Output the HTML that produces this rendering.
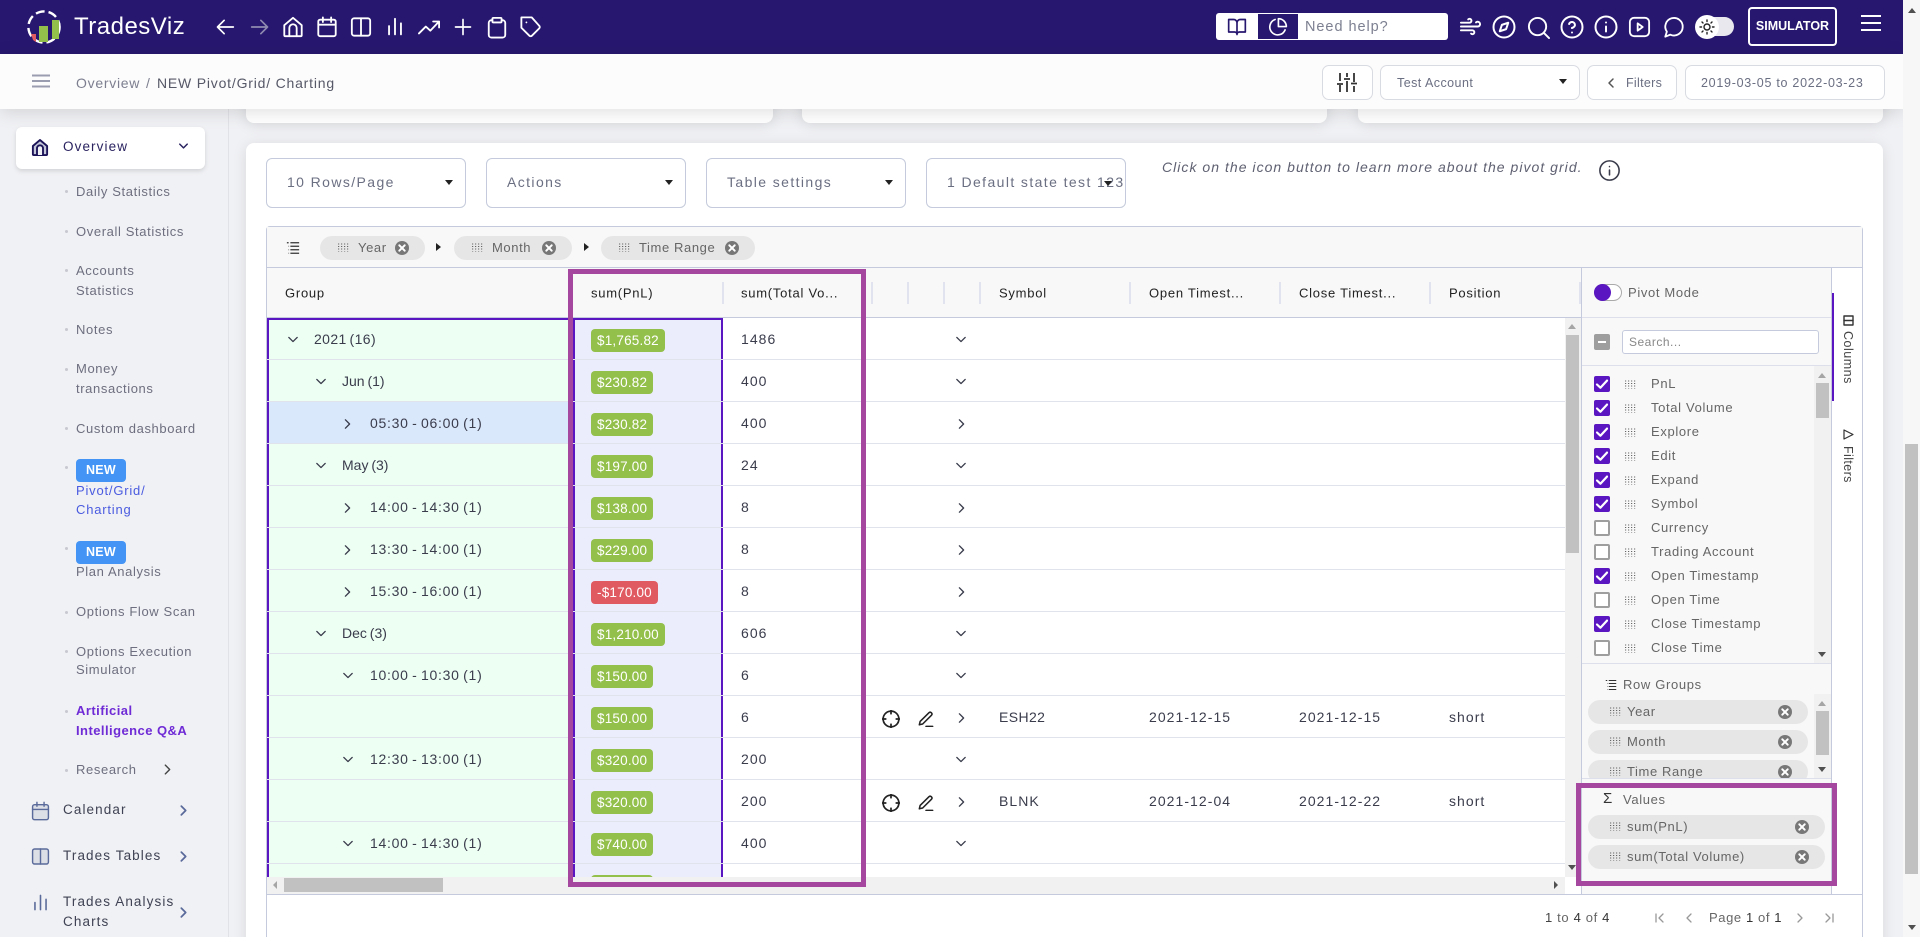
<!DOCTYPE html>
<html><head><meta charset="utf-8"><title>TradesViz</title>
<style>
html,body{margin:0;padding:0;width:1920px;height:937px;overflow:hidden;background:#f0f1f4;font-family:"Liberation Sans",sans-serif}
*{box-sizing:border-box}
#root{position:absolute;left:0;top:0;width:1920px;height:937px;overflow:hidden;background:#f0f1f4}
svg{position:absolute;overflow:visible;fill:none;stroke:currentColor;stroke-width:2;stroke-linecap:round;stroke-linejoin:round}
.x{position:absolute;white-space:nowrap}
#hd{position:absolute;left:0;top:0;width:1903px;height:54px;background:#27176f;color:#fff}
#sub{position:absolute;left:0;top:54px;width:1903px;height:55px;background:#fcfcfc;box-shadow:0 3px 18px rgba(0,0,0,.13);z-index:3}
#side{position:absolute;left:0;top:109px;width:229px;height:828px;border-right:1px solid #e0e2e7;background:#f0f1f4}
.s{position:absolute;left:76px;font-size:13px;letter-spacing:.62px;color:#6d6e7f;white-space:nowrap;line-height:18px}
.b{position:absolute;left:65px;width:3px;height:3px;border-radius:50%;background:#c7c9d0}
.m{position:absolute;left:63px;font-size:13.5px;letter-spacing:1.1px;color:#3f4254;white-space:nowrap;line-height:18px}
.new{position:absolute;left:76px;width:50px;height:23px;border-radius:4px;background:#4394f4;color:#fff;font-size:12.5px;font-weight:bold;text-align:center;line-height:22px;letter-spacing:.3px}
.card{position:absolute;background:#fff;border-radius:8px;box-shadow:0 2px 14px rgba(0,0,0,.1)}
.sel{position:absolute;top:158px;height:50px;width:200px;border:1px solid #c5cbdc;border-radius:6px;background:#fff;overflow:hidden}
.st{position:absolute;left:20px;top:0;line-height:47px;font-size:14px;letter-spacing:1.4px;color:#6b6f82;white-space:nowrap}
.car{position:absolute;width:0;height:0;border-left:4px solid transparent;border-right:4px solid transparent;border-top:5px solid #222}
.bt{position:absolute;top:65px;height:35px;border:1px solid #d9dbe2;border-radius:7px;background:#fff;font-size:12.5px;letter-spacing:.45px;color:#6b6f82;line-height:34px;white-space:nowrap}
.chip{position:absolute;height:24px;border-radius:12px;background:#e6e6e6;font-size:13px;letter-spacing:.6px;color:#666;line-height:24px;white-space:nowrap}
.ch{position:absolute;top:293px;font-size:13px;letter-spacing:.75px;color:#222;transform:translateY(-50%);white-space:nowrap}
.sp{position:absolute;top:282px;width:2px;height:22px;background:#e1e4ee}
#rows{position:absolute;left:267px;top:317px;width:1298px;height:560px;overflow:hidden;background:#fff}
.r{position:absolute;left:0;margin-top:1px;width:1298px;height:42px;border-bottom:1px solid #e1e3ec;font-size:14px;letter-spacing:1.05px;color:#3a3c4c}
.r>span{position:absolute;top:0;line-height:43px;white-space:nowrap}
.r>span.g{letter-spacing:.72px;word-spacing:-1.1px}
.r>span.l{letter-spacing:0;word-spacing:-1px}
.r>em{position:absolute;left:324px;top:11px;height:23px;border-radius:4px;background:#93bf4b;color:#fff;font:13.5px/23px "Liberation Sans",sans-serif;letter-spacing:.2px;padding:0 6px;text-align:center}
.r>svg{color:#3a3c4c;stroke-width:1.6}
.r>svg.ic{color:#222;stroke-width:2.3}
.cl{position:absolute;left:1594px;width:16px;height:16px;border-radius:2px;background:#5a16c0}
.cl.u{background:#fff;border:2px solid #9e9e9e}
.cn{position:absolute;left:1651px;font-size:13px;letter-spacing:.65px;color:#666;line-height:18px;white-space:nowrap}
.tr{position:absolute;width:0;height:0}
.ann{position:absolute;border:5px solid #a5479f;z-index:5}
</style></head><body>
<div id="root">
<svg width="0" height="0" style="position:absolute"><defs>
<symbol id="dn" viewBox="0 0 12 8"><path d="M1 1.500l5 5 5-5"/></symbol>
<symbol id="rt" viewBox="0 0 8 12"><path d="M1.500 1l5 5-5 5"/></symbol>
<symbol id="grip" viewBox="0 0 11 9"><path d="M.6 .5v8M3.600 .5v8M6.600 .5v8M9.600 .5v8" stroke="#666" stroke-width="1.200" stroke-dasharray="1 1.500" stroke-linecap="butt"/></symbol>
<symbol id="cls" viewBox="0 0 14 14"><circle cx="7" cy="7" r="7" fill="#777" stroke="none"/><path d="M4.300 4.300l5.400 5.400M9.700 4.300l-5.400 5.400" stroke="#fff" stroke-width="2"/></symbol>
<symbol id="chk" viewBox="0 0 16 16"><path d="M3 8.500l3.400 3.200L13 4.600" stroke="#fff" stroke-width="2.200"/></symbol>
<symbol id="cross" viewBox="0 0 24 24"><circle cx="12" cy="12" r="10.500"/><path d="M12 0v5M12 19v5M0 12h5M19 12h5"/></symbol>
<symbol id="pen" viewBox="0 0 24 24"><path d="M16.500 2.500a2.700 2.700 0 0 1 3.800 3.800L7 19.500l-5 1.200 1.200-5L16.500 2.500z"/><path d="M12 23h10"/></symbol>
<symbol id="lst" viewBox="0 0 16 16"><path d="M1 2h2M5 2h10M5 6h10M5 10h10M5 14h10M3 6h.5M3 10h.5M3 14h.5" stroke-width="1.400" stroke-linecap="butt"/></symbol>
</defs></svg>

<div id="hd">
<svg style="left:27px;top:10px" width="34" height="34" viewBox="0 0 34 34"><circle cx="17" cy="17" r="15.600" stroke="#fff" stroke-width="2.400" stroke-dasharray="9 4" stroke-linecap="butt"/><rect x="12" y="16" width="9" height="16" fill="#93bf4b" stroke="none"/><rect x="25" y="10" width="7" height="19" fill="#93bf4b" stroke="none"/><path d="M4 24h5v8l-3-2z" fill="#e05a62" stroke="none"/></svg>
<div class="x" style="left:74px;top:13px;font-size:24px;line-height:28px;letter-spacing:.5px;color:#fff">TradesViz</div>
<svg style="left:215px;top:17px" width="20" height="20" viewBox="0 0 24 24"><path d="M22 12H3M11 20l-8-8 8-8"/></svg>
<svg style="left:250px;top:17px;color:#8f8ab0" width="20" height="20" viewBox="0 0 24 24"><path d="M2 12h19M13 4l8 8-8 8"/></svg>
<svg style="left:282px;top:16px" width="22" height="22" viewBox="0 0 24 24"><path d="M2.500 10L12 2l9.500 8v11a1 1 0 0 1-1 1h-17a1 1 0 0 1-1-1z"/><path d="M8 22v-9a4 4 0 0 1 8 0v9"/></svg>
<svg style="left:316px;top:16px" width="22" height="22" viewBox="0 0 24 24"><rect x="2.500" y="4" width="19" height="18" rx="2"/><path d="M7.500 1.500v5M16.500 1.500v5M2.500 9.500h19"/></svg>
<svg style="left:350px;top:16px" width="22" height="22" viewBox="0 0 24 24"><rect x="2" y="2.500" width="20" height="19" rx="2.500"/><path d="M12 2.500v19"/></svg>
<svg style="left:384px;top:16px" width="22" height="22" viewBox="0 0 24 24"><path d="M12 20V3M5.500 20v-9M18.500 20V8"/></svg>
<svg style="left:417px;top:16px" width="24" height="22" viewBox="0 0 24 24"><path d="M1 19l7.500-7.500 5 4.500L23 6M16.500 6H23v6.500"/></svg>
<svg style="left:453px;top:17px" width="20" height="20" viewBox="0 0 24 24"><path d="M12 3v18M3 12h18"/></svg>
<svg style="left:486px;top:16px" width="22" height="23" viewBox="0 0 24 24"><path d="M17 4h1a3 3 0 0 1 3 3v13a3 3 0 0 1-3 3H6a3 3 0 0 1-3-3V7a3 3 0 0 1 3-3h1"/><rect x="7" y="1.500" width="10" height="5" rx="1"/></svg>
<svg style="left:520px;top:16px" width="22" height="22" viewBox="0 0 24 24"><path d="M21 13.500l-8 8a2 2 0 0 1-2.800 0L1.500 12.800V1.500h11.300L21 10.700a2 2 0 0 1 0 2.800z"/><path d="M7 7h.01"/></svg>

<div style="position:absolute;left:1216px;top:13px;width:232px;height:27px;background:#fff;border-radius:3px"></div>
<svg style="left:1227px;top:17px;color:#27176f" width="20" height="20" viewBox="0 0 24 24"><path d="M2 3h6a4 4 0 0 1 4 4v14a3 3 0 0 0-3-3H2zM22 3h-6a4 4 0 0 0-4 4v14a3 3 0 0 1 3-3h7z"/></svg>
<div style="position:absolute;left:1258px;top:14px;width:40px;height:25px;background:#27176f"></div>
<svg style="left:1268px;top:17px" width="20" height="20" viewBox="0 0 24 24"><path d="M20.500 15.500A9.500 9.500 0 1 1 8.500 3"/><path d="M22 11.500A9.500 9.500 0 0 0 12.500 2v9.500z"/></svg>
<div class="x" style="left:1305px;top:14px;line-height:27px;font-size:14.500px;letter-spacing:.95px;color:#7d8091">Need help?</div>
<svg style="left:1459px;top:15px" width="23" height="23" viewBox="0 0 24 24"><path d="M9.590 4.590A2 2 0 1 1 11 8H2m10.590 11.410A2 2 0 1 0 14 16H2m15.730-8.270A2.500 2.500 0 1 1 19.500 12H2"/></svg>
<svg style="left:1492px;top:15px" width="24" height="24" viewBox="0 0 24 24"><circle cx="12" cy="12" r="10.500"/><path d="M16.240 7.760l-2.120 6.360-6.360 2.120 2.120-6.360z"/></svg>
<svg style="left:1527px;top:16px" width="23" height="23" viewBox="0 0 24 24"><circle cx="11" cy="11" r="9"/><path d="M23 23l-5.500-5.500"/></svg>
<svg style="left:1560px;top:15px" width="24" height="24" viewBox="0 0 24 24"><circle cx="12" cy="12" r="10.500"/><path d="M9.090 9a3 3 0 0 1 5.830 1c0 2-3 3-3 3M12 17.500h.01"/></svg>
<svg style="left:1594px;top:15px" width="24" height="24" viewBox="0 0 24 24"><circle cx="12" cy="12" r="10.500"/><path d="M12 16.500v-5M12 7.500h.01"/></svg>
<svg style="left:1628px;top:16px" width="23" height="22" viewBox="0 0 24 24"><rect x="1.500" y="2" width="21" height="20" rx="4.500"/><path d="M10 8l5.500 4-5.500 4z"/></svg>
<svg style="left:1663px;top:16px" width="22" height="23" viewBox="0 0 24 24"><path d="M21.500 11.500a9.500 9.500 0 0 1-13.500 8.300L2.500 22l1.700-5.500A9.500 9.500 0 1 1 21.500 11.500z"/></svg>
<div style="position:absolute;left:1702px;top:17px;width:32px;height:19px;border-radius:10px;background:#e8e8ee"></div>
<div style="position:absolute;left:1695px;top:15px;width:24px;height:24px;border-radius:50%;background:#fff"></div>
<svg style="left:1700px;top:20px;color:#222;stroke-width:1.400" width="14" height="14" viewBox="0 0 14 14"><circle cx="7" cy="7" r="3"/><path d="M7 0v1.500M7 12.500V14M0 7h1.500M12.500 7H14M2 2l1 1M11 11l1 1M12 2l-1 1M3 11l-1 1"/></svg>
<div class="x" style="left:1748px;top:7px;width:89px;height:39px;border:2px solid #fff;border-radius:4px;text-align:center;line-height:35px;font-size:12.500px;font-weight:bold;color:#fff">SIMULATOR</div>
<svg style="left:1861px;top:15px" width="20" height="16" viewBox="0 0 20 16"><path d="M0 1h20M0 8h20M0 15h20" stroke-linecap="butt"/></svg>
</div>

<div id="sub">
<svg style="left:32px;top:20px;color:#9a9cb0" width="18" height="14" viewBox="0 0 18 14"><path d="M0 1.500h18M0 7h18M0 12.500h18" stroke-linecap="butt"/></svg>
<div class="x" style="left:76px;top:20px;font-size:14px;line-height:18px;letter-spacing:.72px;color:#7d7f90">Overview</div>
<div class="x" style="left:146px;top:20px;font-size:14px;line-height:18px;color:#7d7f90">/</div>
<div class="x" style="left:157px;top:20px;font-size:14px;line-height:18px;letter-spacing:.8px;color:#565868">NEW Pivot/Grid/ Charting</div>
<div class="bt" style="left:1322px;top:11px;width:51px"></div>
<svg style="left:1337px;top:19px;color:#333;stroke-width:1.800" width="20" height="19" viewBox="0 0 20 19"><path d="M3 0v8M3 12v7M10 0v4M10 8v11M17 0v9M17 13v6M0 11h6M7 6h6M14 10.500h6" stroke-linecap="butt"/></svg>
<div class="bt" style="left:1380px;top:11px;width:200px;padding-left:16px">Test Account</div>
<div class="car" style="left:1559px;top:25px"></div>
<div class="bt" style="left:1587px;top:11px;width:90px;padding-left:38px;letter-spacing:.3px">Filters</div>
<svg style="left:1608px;top:24px;color:#555;stroke-width:1.500" width="6" height="10" viewBox="0 0 6 10"><path d="M5 1L1 5l4 4"/></svg>
<div class="bt" style="left:1685px;top:11px;width:200px;padding-left:15px;letter-spacing:.72px">2019-03-05 to 2022-03-23</div>
</div>

<div id="side">
<div style="position:absolute;left:16px;top:18px;width:189px;height:42px;background:#fff;border-radius:6px;box-shadow:0 2px 5px rgba(0,0,0,.13)"></div>
<svg style="left:31px;top:29px;color:#1c1458;stroke-width:2.500" width="18" height="19" viewBox="0 0 24 24"><path d="M2.500 10L12 2l9.500 8v11a1 1 0 0 1-1 1h-17a1 1 0 0 1-1-1z" fill="#c3c5d8"/><path d="M8 22v-9a4 4 0 0 1 8 0v9" fill="#f0f1f4"/></svg>
<div class="m" style="top:29px;color:#2a2360">Overview</div>
<svg style="left:179px;top:34px;color:#2a2360;stroke-width:2" width="9" height="6" viewBox="0 0 12 8"><path d="M1 1.500l5 5 5-5"/></svg>
<i class="b" style="top:81px"></i><div class="s" style="top:74px">Daily Statistics</div>
<i class="b" style="top:121px"></i><div class="s" style="top:114px">Overall Statistics</div>
<i class="b" style="top:160px"></i><div class="s" style="top:153px">Accounts</div><div class="s" style="top:173px">Statistics</div>
<i class="b" style="top:219px"></i><div class="s" style="top:212px">Notes</div>
<i class="b" style="top:259px"></i><div class="s" style="top:251px">Money</div><div class="s" style="top:271px">transactions</div>
<i class="b" style="top:318px"></i><div class="s" style="top:311px">Custom dashboard</div>
<i class="b" style="top:357px"></i><div class="new" style="top:350px">NEW</div><div class="s" style="top:373px;color:#4a5be0;letter-spacing:.8px">Pivot/Grid/</div><div class="s" style="top:392px;color:#4a5be0;letter-spacing:.8px">Charting</div>
<i class="b" style="top:438px"></i><div class="new" style="top:432px">NEW</div><div class="s" style="top:454px">Plan Analysis</div>
<i class="b" style="top:502px"></i><div class="s" style="top:494px">Options Flow Scan</div>
<i class="b" style="top:541px"></i><div class="s" style="top:534px">Options Execution</div><div class="s" style="top:552px">Simulator</div>
<i class="b" style="top:601px"></i><div class="s" style="top:593px;color:#6f2bd6;font-weight:bold;letter-spacing:.45px">Artificial</div><div class="s" style="top:613px;color:#6f2bd6;font-weight:bold;letter-spacing:.45px">Intelligence Q&amp;A</div>
<i class="b" style="top:660px"></i><div class="s" style="top:652px">Research</div>
<svg style="left:164px;top:655px;color:#444;stroke-width:1.600" width="7" height="11" viewBox="0 0 8 12"><path d="M1.500 1l5 5-5 5"/></svg>
<svg style="left:31px;top:692px;color:#5a6a9a;stroke-width:1.800" width="19" height="20" viewBox="0 0 24 24"><rect x="2" y="4" width="20" height="19" rx="2.500" fill="#dcdfe6"/><path d="M7.500 1v5M16.500 1v5M2 10h20"/></svg>
<div class="m" style="top:692px">Calendar</div>
<svg style="left:180px;top:696px;color:#5a6a9a" width="7" height="11" viewBox="0 0 8 12"><path d="M1.500 1l5 5-5 5"/></svg>
<svg style="left:31px;top:738px;color:#5a6a9a;stroke-width:1.800" width="19" height="19" viewBox="0 0 24 24"><rect x="2" y="2.500" width="20" height="19" rx="2.500" fill="#dcdfe6"/><path d="M12 2.500v19"/></svg>
<div class="m" style="top:738px">Trades Tables</div>
<svg style="left:180px;top:742px;color:#5a6a9a" width="7" height="11" viewBox="0 0 8 12"><path d="M1.500 1l5 5-5 5"/></svg>
<svg style="left:31px;top:784px;color:#5a6a9a" width="19" height="19" viewBox="0 0 24 24"><path d="M12 21V3M5 21v-9M19 21V8"/></svg>
<div class="m" style="top:784px">Trades Analysis</div><div class="m" style="top:804px">Charts</div>
<svg style="left:180px;top:798px;color:#5a6a9a" width="7" height="11" viewBox="0 0 8 12"><path d="M1.500 1l5 5-5 5"/></svg>
</div>

<div class="card" style="left:246px;top:90px;width:527px;height:33px"></div>
<div class="card" style="left:802px;top:90px;width:525px;height:33px"></div>
<div class="card" style="left:1358px;top:90px;width:525px;height:33px"></div>
<div class="card" style="left:246px;top:143px;width:1637px;height:830px"></div>

<div class="sel" style="left:266px"><div class="st">10 Rows/Page</div></div><div class="car" style="left:445px;top:180px"></div>
<div class="sel" style="left:486px"><div class="st">Actions</div></div><div class="car" style="left:665px;top:180px"></div>
<div class="sel" style="left:706px"><div class="st">Table settings</div></div><div class="car" style="left:885px;top:180px"></div>
<div class="sel" style="left:926px"><div class="st">1 Default state test 123</div><div class="car" style="left:177px;top:22px"></div></div>
<div class="x" style="left:1162px;top:158px;font-size:14px;line-height:18px;font-style:italic;letter-spacing:1.03px;color:#5f6172">Click on the icon button to learn more about the pivot grid.</div>
<svg style="left:1599px;top:160px;color:#3a3c4c;stroke-width:1.800" width="21" height="21" viewBox="0 0 24 24"><circle cx="12" cy="12" r="11"/><path d="M12 17v-5.500M12 7.500h.01"/></svg>

<!-- grid frame -->
<div style="position:absolute;left:266px;top:226px;width:1597px;height:740px;border:1px solid #c5cbdc;border-bottom:0;border-radius:4px 4px 0 0;background:#fff"></div>
<div style="position:absolute;left:267px;top:227px;width:1595px;height:41px;background:#f8f8f8;border-bottom:1px solid #c5cbdc"></div>
<svg style="left:286px;top:241px;color:#333" width="14" height="14" viewBox="0 0 16 16"><use href="#lst"/></svg>
<div class="chip" style="left:320px;top:236px;width:105px;padding-left:38px">Year</div>
<svg style="left:338px;top:243px;width:11px;height:9px"><use href="#grip"/></svg>
<svg style="left:395px;top:241px;width:14px;height:14px"><use href="#cls"/></svg>
<div class="tr" style="left:436px;top:243px;border-left:5px solid #222;border-top:4px solid transparent;border-bottom:4px solid transparent"></div>
<div class="chip" style="left:454px;top:236px;width:118px;padding-left:38px">Month</div>
<svg style="left:472px;top:243px;width:11px;height:9px"><use href="#grip"/></svg>
<svg style="left:542px;top:241px;width:14px;height:14px"><use href="#cls"/></svg>
<div class="tr" style="left:584px;top:243px;border-left:5px solid #222;border-top:4px solid transparent;border-bottom:4px solid transparent"></div>
<div class="chip" style="left:601px;top:236px;width:154px;padding-left:38px">Time Range</div>
<svg style="left:619px;top:243px;width:11px;height:9px"><use href="#grip"/></svg>
<svg style="left:725px;top:241px;width:14px;height:14px"><use href="#cls"/></svg>

<!-- header row -->
<div style="position:absolute;left:267px;top:268px;width:1315px;height:50px;background:#f8f8f8;border-bottom:1px solid #c5cbdc"></div>
<div class="ch" style="left:285px">Group</div>
<div class="ch" style="left:591px">sum(PnL)</div><i class="sp" style="left:722px"></i>
<div class="ch" style="left:741px">sum(Total Vo...</div><i class="sp" style="left:871px"></i><i class="sp" style="left:907px"></i><i class="sp" style="left:943px"></i><i class="sp" style="left:979px"></i>
<div class="ch" style="left:999px">Symbol</div><i class="sp" style="left:1129px"></i>
<div class="ch" style="left:1149px">Open Timest...</div><i class="sp" style="left:1279px"></i>
<div class="ch" style="left:1299px">Close Timest...</div><i class="sp" style="left:1429px"></i>
<div class="ch" style="left:1449px">Position</div><i class="sp" style="left:1579px"></i>

<!-- rows -->
<div id="rows" style="top:318px;height:559px">
<div style="position:absolute;left:0;top:0;width:306px;height:560px;background:#edfff3;border-left:2px solid #5a16c0;border-top:2px solid #5a16c0"></div>
<div style="position:absolute;left:0;top:84px;width:306px;height:42px;background:#dae8fb;border-left:2px solid #5a16c0"></div>
<div style="position:absolute;left:306px;top:0;width:150px;height:560px;background:#ebedfd;border-left:2px solid #5a16c0;border-right:2px solid #5a16c0;border-top:2px solid #5a16c0"></div>

<div class="r" style="top:-1px"><svg style="left:21px;top:18px" width="10" height="7"><use href="#dn"/></svg><span style="left:47px;letter-spacing:.4px;word-spacing:-1.500px">2021 (16)</span><em>$1,765.82</em><span style="left:474px">1486</span><svg style="left:689px;top:18px" width="10" height="7"><use href="#dn"/></svg></div>
<div class="r" style="top:41px"><svg style="left:49px;top:18px" width="10" height="7"><use href="#dn"/></svg><span class="l" style="left:75px">Jun (1)</span><em>$230.82</em><span style="left:474px">400</span><svg style="left:689px;top:18px" width="10" height="7"><use href="#dn"/></svg></div>
<div class="r" style="top:83px"><svg style="left:77px;top:17px" width="7" height="10"><use href="#rt"/></svg><span class="g" style="left:103px">05:30 - 06:00 (1)</span><em>$230.82</em><span style="left:474px">400</span><svg style="left:691px;top:17px" width="7" height="10"><use href="#rt"/></svg></div>
<div class="r" style="top:125px"><svg style="left:49px;top:18px" width="10" height="7"><use href="#dn"/></svg><span class="l" style="left:75px">May (3)</span><em>$197.00</em><span style="left:474px">24</span><svg style="left:689px;top:18px" width="10" height="7"><use href="#dn"/></svg></div>
<div class="r" style="top:167px"><svg style="left:77px;top:17px" width="7" height="10"><use href="#rt"/></svg><span class="g" style="left:103px">14:00 - 14:30 (1)</span><em>$138.00</em><span style="left:474px">8</span><svg style="left:691px;top:17px" width="7" height="10"><use href="#rt"/></svg></div>
<div class="r" style="top:209px"><svg style="left:77px;top:17px" width="7" height="10"><use href="#rt"/></svg><span class="g" style="left:103px">13:30 - 14:00 (1)</span><em>$229.00</em><span style="left:474px">8</span><svg style="left:691px;top:17px" width="7" height="10"><use href="#rt"/></svg></div>
<div class="r" style="top:251px"><svg style="left:77px;top:17px" width="7" height="10"><use href="#rt"/></svg><span class="g" style="left:103px">15:30 - 16:00 (1)</span><em style="background:#e05a62">-$170.00</em><span style="left:474px">8</span><svg style="left:691px;top:17px" width="7" height="10"><use href="#rt"/></svg></div>
<div class="r" style="top:293px"><svg style="left:49px;top:18px" width="10" height="7"><use href="#dn"/></svg><span class="l" style="left:75px">Dec (3)</span><em>$1,210.00</em><span style="left:474px">606</span><svg style="left:689px;top:18px" width="10" height="7"><use href="#dn"/></svg></div>
<div class="r" style="top:335px"><svg style="left:76px;top:18px" width="10" height="7"><use href="#dn"/></svg><span class="g" style="left:103px">10:00 - 10:30 (1)</span><em>$150.00</em><span style="left:474px">6</span><svg style="left:689px;top:18px" width="10" height="7"><use href="#dn"/></svg></div>
<div class="r" style="top:377px"><em>$150.00</em><span style="left:474px">6</span><svg class="ic" style="left:615px;top:14px" width="18" height="18" viewBox="0 0 24 24"><use href="#cross"/></svg><svg class="ic" style="left:651px;top:15px" width="16" height="16" viewBox="0 0 24 24"><use href="#pen"/></svg><svg style="left:691px;top:17px" width="7" height="10"><use href="#rt"/></svg><span style="left:732px;letter-spacing:.4px">ESH22</span><span style="left:882px">2021-12-15</span><span style="left:1032px">2021-12-15</span><span style="left:1182px">short</span></div>
<div class="r" style="top:419px"><svg style="left:76px;top:18px" width="10" height="7"><use href="#dn"/></svg><span class="g" style="left:103px">12:30 - 13:00 (1)</span><em>$320.00</em><span style="left:474px">200</span><svg style="left:689px;top:18px" width="10" height="7"><use href="#dn"/></svg></div>
<div class="r" style="top:461px"><em>$320.00</em><span style="left:474px">200</span><svg class="ic" style="left:615px;top:14px" width="18" height="18" viewBox="0 0 24 24"><use href="#cross"/></svg><svg class="ic" style="left:651px;top:15px" width="16" height="16" viewBox="0 0 24 24"><use href="#pen"/></svg><svg style="left:691px;top:17px" width="7" height="10"><use href="#rt"/></svg><span style="left:732px">BLNK</span><span style="left:882px">2021-12-04</span><span style="left:1032px">2021-12-22</span><span style="left:1182px">short</span></div>
<div class="r" style="top:503px"><svg style="left:76px;top:18px" width="10" height="7"><use href="#dn"/></svg><span class="g" style="left:103px">14:00 - 14:30 (1)</span><em>$740.00</em><span style="left:474px">400</span><svg style="left:689px;top:18px" width="10" height="7"><use href="#dn"/></svg></div>
<div class="r" style="top:545px"><em>$000.00</em></div>
</div>

<!-- grid scrollbars -->
<div style="position:absolute;left:1565px;top:318px;width:17px;height:559px;background:#f1f1f1"></div>
<div style="position:absolute;left:1566px;top:335px;width:13px;height:218px;background:#c1c1c1"></div>
<div class="tr" style="left:1568px;top:324px;border-bottom:5px solid #a5a5a5;border-left:4px solid transparent;border-right:4px solid transparent"></div>
<div class="tr" style="left:1568px;top:865px;border-top:5px solid #505050;border-left:4px solid transparent;border-right:4px solid transparent"></div>
<div style="position:absolute;left:267px;top:877px;width:1298px;height:17px;background:#f1f1f1"></div>
<div style="position:absolute;left:284px;top:878px;width:159px;height:14px;background:#c1c1c1"></div>
<div class="tr" style="left:273px;top:881px;border-right:4px solid #a5a5a5;border-top:4px solid transparent;border-bottom:4px solid transparent"></div>
<div class="tr" style="left:1554px;top:881px;border-left:4px solid #505050;border-top:4px solid transparent;border-bottom:4px solid transparent"></div>
<div style="position:absolute;left:267px;top:894px;width:1595px;height:1px;background:#c5cbdc"></div>

<!-- side panel -->
<div style="position:absolute;left:1581px;top:268px;width:251px;height:626px;background:#f8f8f8;border-left:1px solid #c5cbdc;border-right:1px solid #c5cbdc"></div>
<div style="position:absolute;left:1832px;top:268px;width:30px;height:626px;background:#fff"></div>
<div style="position:absolute;left:1832px;top:293px;width:2px;height:108px;background:#5a16c0"></div>
<div style="position:absolute;left:1582px;top:317px;width:249px;height:1px;background:#dde0ea"></div>
<div style="position:absolute;left:1582px;top:365px;width:249px;height:1px;background:#dde0ea"></div>
<div style="position:absolute;left:1594px;top:284px;width:28px;height:17px;border:1px solid #aaa;border-radius:9px;background:#fff"></div>
<div style="position:absolute;left:1594px;top:284px;width:17px;height:17px;border-radius:50%;background:#5a16c0"></div>
<div class="cn" style="left:1628px;top:284px">Pivot Mode</div>
<div style="position:absolute;left:1594px;top:334px;width:16px;height:16px;border-radius:2px;background:#9e9e9e"></div>
<div style="position:absolute;left:1598px;top:341px;width:8px;height:2px;background:#fff"></div>
<div style="position:absolute;left:1622px;top:330px;width:197px;height:24px;background:#fff;border:1px solid #c5cbdc;border-radius:3px;font-size:12px;letter-spacing:.5px;color:#888;line-height:22px;padding-left:6px">Search...</div>

<i class="cl" style="top:376px"></i><svg style="left:1594px;top:376px;width:16px;height:16px"><use href="#chk"/></svg><svg style="left:1625px;top:380px;width:11px;height:9px"><use href="#grip"/></svg><div class="cn" style="top:375px">PnL</div>
<i class="cl" style="top:400px"></i><svg style="left:1594px;top:400px;width:16px;height:16px"><use href="#chk"/></svg><svg style="left:1625px;top:404px;width:11px;height:9px"><use href="#grip"/></svg><div class="cn" style="top:399px">Total Volume</div>
<i class="cl" style="top:424px"></i><svg style="left:1594px;top:424px;width:16px;height:16px"><use href="#chk"/></svg><svg style="left:1625px;top:428px;width:11px;height:9px"><use href="#grip"/></svg><div class="cn" style="top:423px">Explore</div>
<i class="cl" style="top:448px"></i><svg style="left:1594px;top:448px;width:16px;height:16px"><use href="#chk"/></svg><svg style="left:1625px;top:452px;width:11px;height:9px"><use href="#grip"/></svg><div class="cn" style="top:447px">Edit</div>
<i class="cl" style="top:472px"></i><svg style="left:1594px;top:472px;width:16px;height:16px"><use href="#chk"/></svg><svg style="left:1625px;top:476px;width:11px;height:9px"><use href="#grip"/></svg><div class="cn" style="top:471px">Expand</div>
<i class="cl" style="top:496px"></i><svg style="left:1594px;top:496px;width:16px;height:16px"><use href="#chk"/></svg><svg style="left:1625px;top:500px;width:11px;height:9px"><use href="#grip"/></svg><div class="cn" style="top:495px">Symbol</div>
<i class="cl u" style="top:520px"></i><svg style="left:1625px;top:524px;width:11px;height:9px"><use href="#grip"/></svg><div class="cn" style="top:519px">Currency</div>
<i class="cl u" style="top:544px"></i><svg style="left:1625px;top:548px;width:11px;height:9px"><use href="#grip"/></svg><div class="cn" style="top:543px">Trading Account</div>
<i class="cl" style="top:568px"></i><svg style="left:1594px;top:568px;width:16px;height:16px"><use href="#chk"/></svg><svg style="left:1625px;top:572px;width:11px;height:9px"><use href="#grip"/></svg><div class="cn" style="top:567px">Open Timestamp</div>
<i class="cl u" style="top:592px"></i><svg style="left:1625px;top:596px;width:11px;height:9px"><use href="#grip"/></svg><div class="cn" style="top:591px">Open Time</div>
<i class="cl" style="top:616px"></i><svg style="left:1594px;top:616px;width:16px;height:16px"><use href="#chk"/></svg><svg style="left:1625px;top:620px;width:11px;height:9px"><use href="#grip"/></svg><div class="cn" style="top:615px">Close Timestamp</div>
<i class="cl u" style="top:640px"></i><svg style="left:1625px;top:644px;width:11px;height:9px"><use href="#grip"/></svg><div class="cn" style="top:639px">Close Time</div>

<div style="position:absolute;left:1814px;top:366px;width:17px;height:297px;background:#f1f1f1"></div>
<div style="position:absolute;left:1816px;top:383px;width:13px;height:35px;background:#c1c1c1"></div>
<div class="tr" style="left:1818px;top:373px;border-bottom:5px solid #a5a5a5;border-left:4px solid transparent;border-right:4px solid transparent"></div>
<div class="tr" style="left:1818px;top:652px;border-top:5px solid #505050;border-left:4px solid transparent;border-right:4px solid transparent"></div>
<div style="position:absolute;left:1582px;top:663px;width:249px;height:1px;background:#dde0ea"></div>

<svg style="left:1605px;top:679px;color:#333" width="12" height="12" viewBox="0 0 16 16"><use href="#lst"/></svg>
<div class="cn" style="left:1623px;top:676px">Row Groups</div>
<div style="position:absolute;left:1582px;top:694px;width:249px;height:84px;overflow:hidden">
<div class="chip" style="left:6px;top:6px;width:220px;padding-left:39px">Year</div><svg style="left:28px;top:13px;width:11px;height:9px"><use href="#grip"/></svg><svg style="left:196px;top:11px;width:14px;height:14px"><use href="#cls"/></svg>
<div class="chip" style="left:6px;top:36px;width:220px;padding-left:39px">Month</div><svg style="left:28px;top:43px;width:11px;height:9px"><use href="#grip"/></svg><svg style="left:196px;top:41px;width:14px;height:14px"><use href="#cls"/></svg>
<div class="chip" style="left:6px;top:66px;width:220px;padding-left:39px">Time Range</div><svg style="left:28px;top:73px;width:11px;height:9px"><use href="#grip"/></svg><svg style="left:196px;top:71px;width:14px;height:14px"><use href="#cls"/></svg>
</div>
<div style="position:absolute;left:1814px;top:694px;width:17px;height:84px;background:#f1f1f1"></div>
<div style="position:absolute;left:1816px;top:711px;width:13px;height:44px;background:#c1c1c1"></div>
<div class="tr" style="left:1818px;top:701px;border-bottom:5px solid #a5a5a5;border-left:4px solid transparent;border-right:4px solid transparent"></div>
<div class="tr" style="left:1818px;top:767px;border-top:5px solid #505050;border-left:4px solid transparent;border-right:4px solid transparent"></div>
<div style="position:absolute;left:1582px;top:778px;width:249px;height:1px;background:#dde0ea"></div>

<div class="x" style="left:1603px;top:790px;font-size:15px;line-height:18px;color:#333">Σ</div>
<div class="cn" style="left:1623px;top:791px">Values</div>
<div class="chip" style="left:1588px;top:815px;width:237px;padding-left:39px">sum(PnL)</div><svg style="left:1610px;top:822px;width:11px;height:9px"><use href="#grip"/></svg><svg style="left:1795px;top:820px;width:14px;height:14px"><use href="#cls"/></svg>
<div class="chip" style="left:1588px;top:845px;width:237px;padding-left:39px">sum(Total Volume)</div><svg style="left:1610px;top:852px;width:11px;height:9px"><use href="#grip"/></svg><svg style="left:1795px;top:850px;width:14px;height:14px"><use href="#cls"/></svg>

<!-- side tabs -->
<svg style="left:1843px;top:315px;color:#333;stroke-width:1.400" width="11" height="11" viewBox="0 0 11 11"><rect x="1" y="1" width="9" height="9"/><path d="M1 5.500h9"/></svg>
<div class="x" style="left:1841px;top:331px;font-size:12.500px;letter-spacing:.5px;color:#444;writing-mode:vertical-rl;line-height:14px">Columns</div>
<svg style="left:1843px;top:429px;color:#333;stroke-width:1.200" width="11" height="11" viewBox="0 0 11 11"><path d="M1 1l9 4.500-9 4.500z"/></svg>
<div class="x" style="left:1841px;top:446px;font-size:12.500px;letter-spacing:.4px;color:#444;writing-mode:vertical-rl;line-height:14px">Filters</div>

<!-- pagination -->
<div class="x" style="left:1545px;top:909px;font-size:13px;line-height:18px;letter-spacing:.65px;color:#666"><b style="color:#444;font-weight:normal">1</b> to <b style="color:#333;font-weight:normal">4</b> of <b style="color:#333;font-weight:normal">4</b></div>
<svg style="left:1655px;top:913px;color:#999;stroke-width:1.300" width="9" height="10" viewBox="0 0 9 10"><path d="M1 1v8M8 1L4 5l4 4"/></svg>
<svg style="left:1686px;top:913px;color:#999;stroke-width:1.300" width="6" height="10" viewBox="0 0 6 10"><path d="M5 1L1 5l4 4"/></svg>
<div class="x" style="left:1709px;top:909px;font-size:13px;line-height:18px;letter-spacing:.6px;color:#666">Page <span style="color:#333">1</span> of <span style="color:#333">1</span></div>
<svg style="left:1797px;top:913px;color:#999;stroke-width:1.300" width="6" height="10" viewBox="0 0 6 10"><path d="M1 1l4 4-4 4"/></svg>
<svg style="left:1825px;top:913px;color:#999;stroke-width:1.300" width="9" height="10" viewBox="0 0 9 10"><path d="M1 1l4 4-4 4M8 1v8"/></svg>

<!-- annotations -->
<div class="ann" style="left:568px;top:269px;width:298px;height:618px"></div>
<div class="ann" style="left:1576px;top:783px;width:261px;height:103px"></div>

<!-- page scrollbar -->
<div style="position:absolute;left:1903px;top:0;width:17px;height:937px;background:#f7f7f7;z-index:6"></div>
<div style="position:absolute;left:1905px;top:444px;width:13px;height:430px;background:#c1c1c1;z-index:6"></div>
<div class="tr" style="left:1908px;top:8px;border-bottom:5px solid #505050;border-left:4px solid transparent;border-right:4px solid transparent;z-index:6"></div>
<div class="tr" style="left:1908px;top:925px;border-top:5px solid #505050;border-left:4px solid transparent;border-right:4px solid transparent;z-index:6"></div>
</div>
</body></html>
